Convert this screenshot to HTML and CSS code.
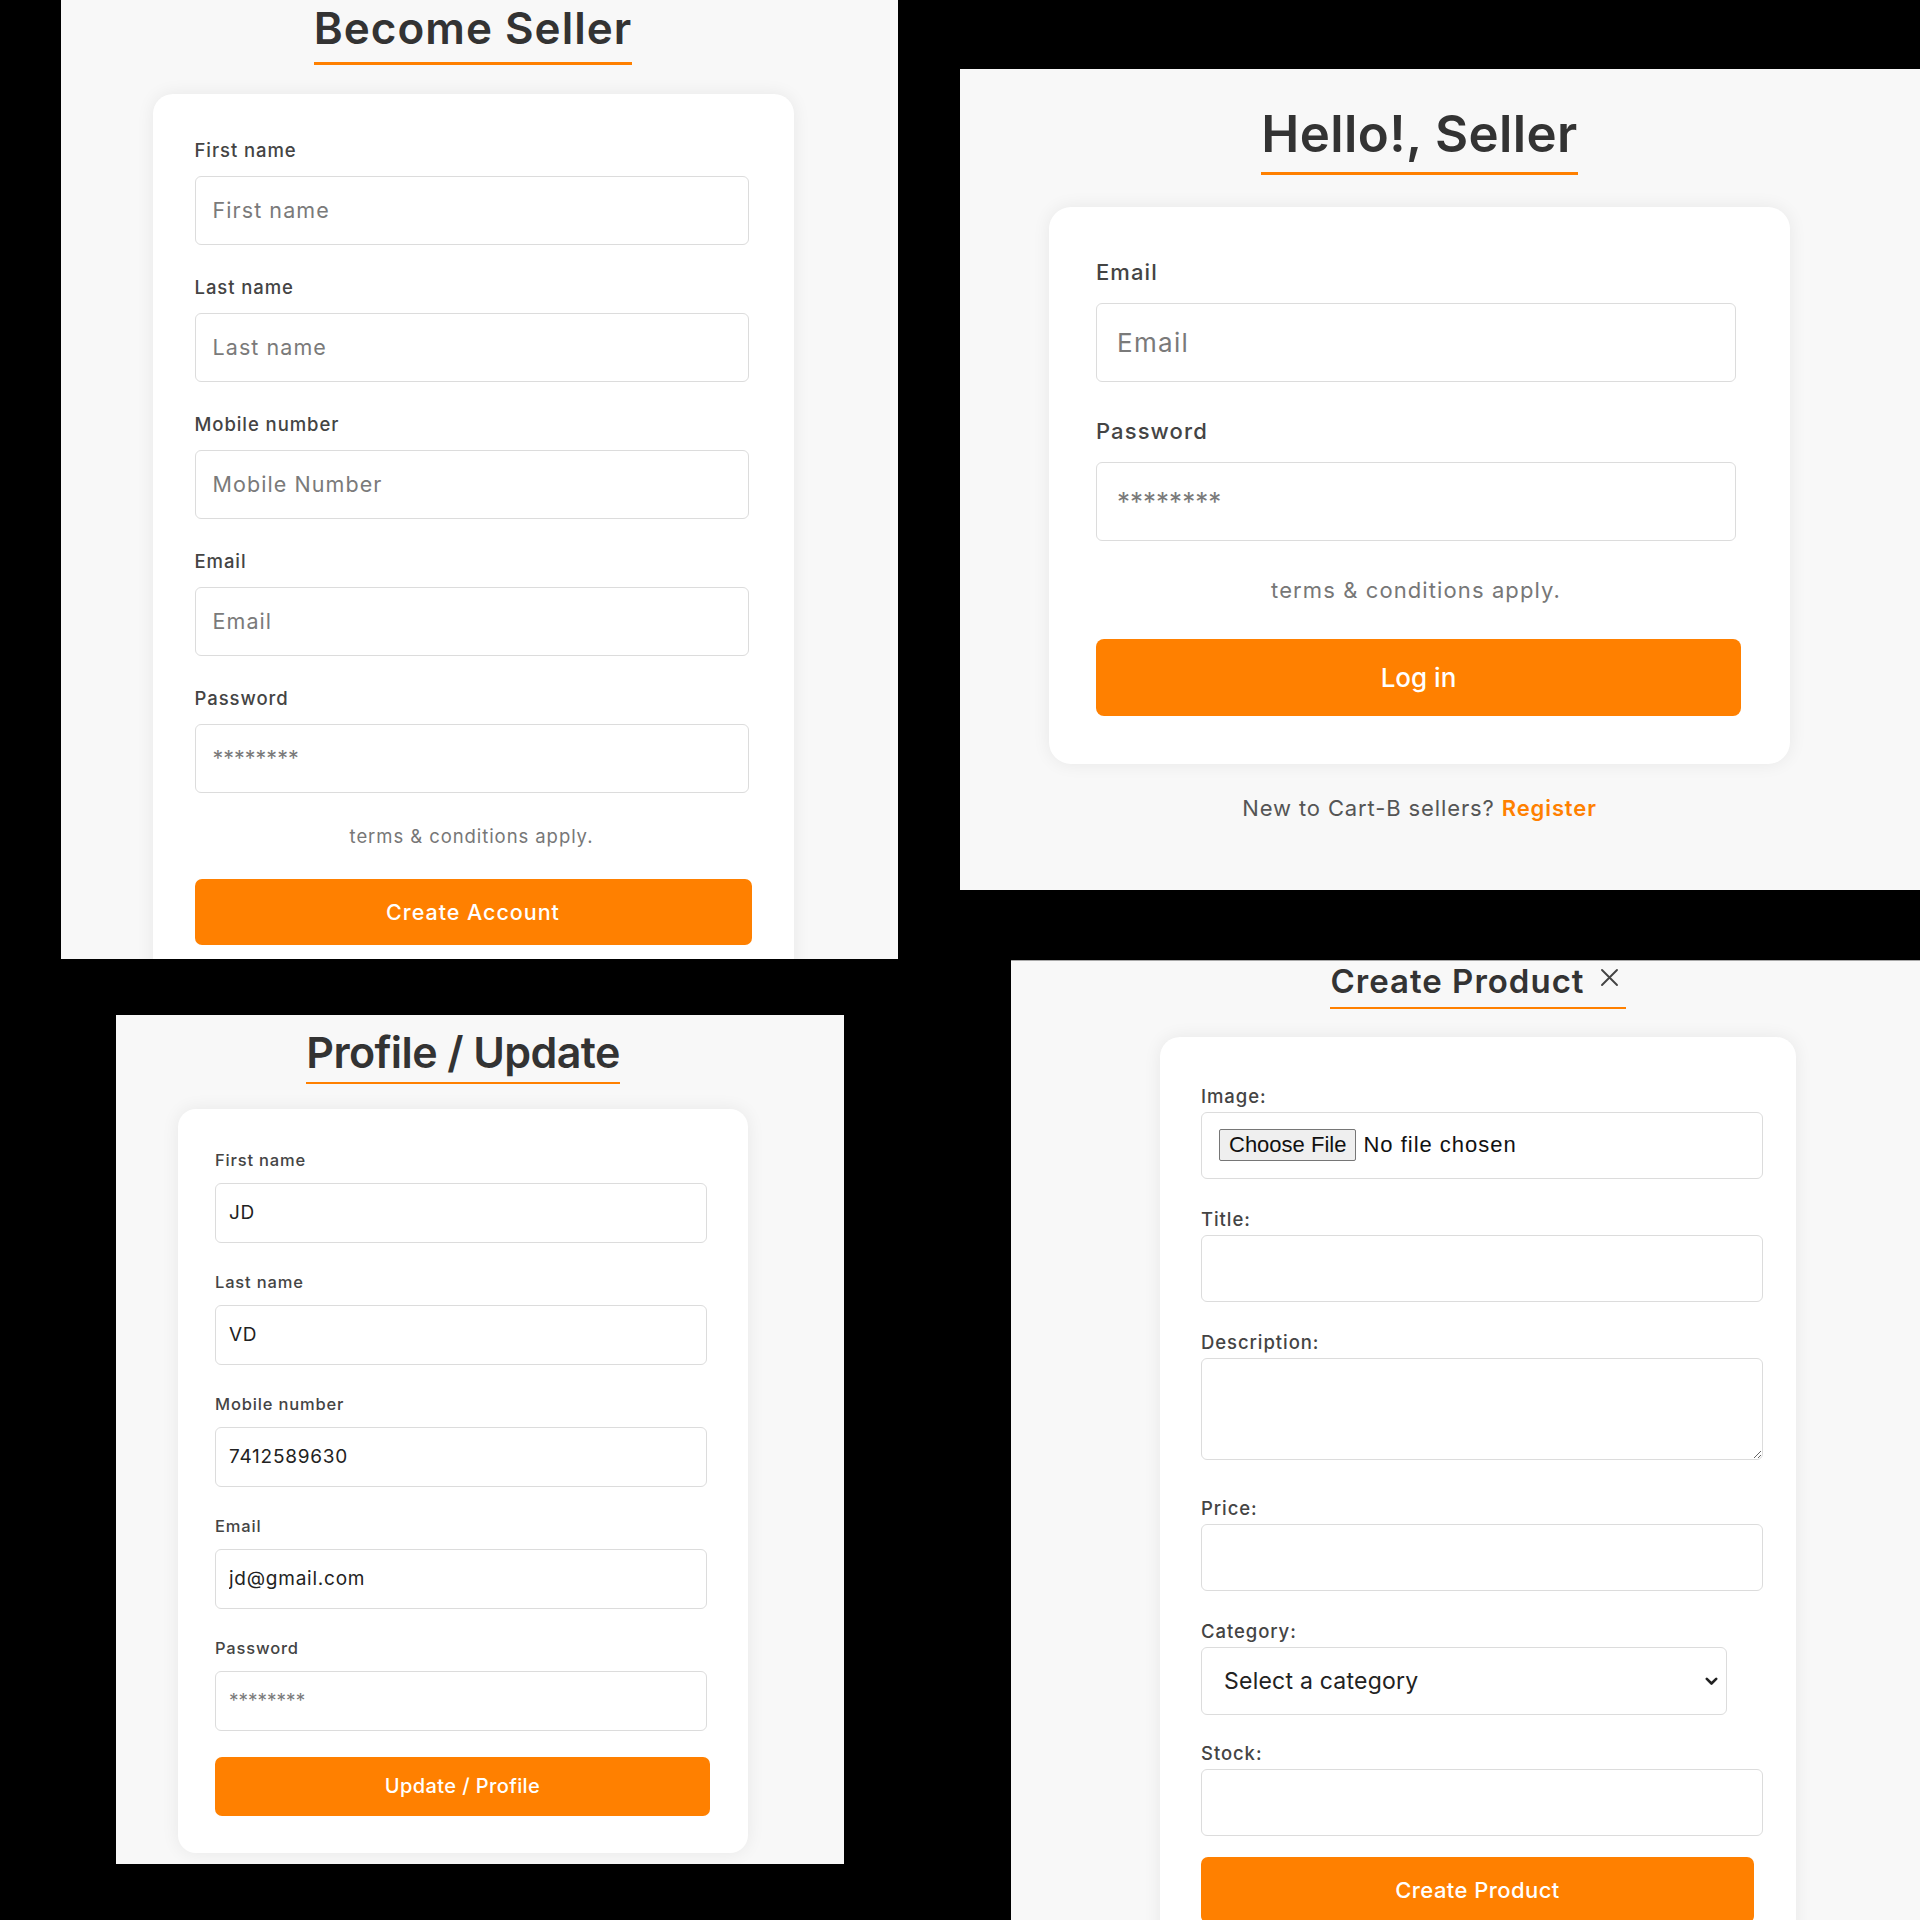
FILE: index.html
```html
<!DOCTYPE html>
<html lang="en">
<head>
<meta charset="utf-8">
<title>Seller screens</title>
<link rel="stylesheet" href="styles.css">
</head>
<body>
<div class="collage">
  <section class="cell">
    <div class="panel p1">
      <h1 class="heading">Become Seller</h1>
      <form class="card">
        <label class="lbl">First name</label>
        <input class="field" type="text" placeholder="First name">
        <label class="lbl">Last name</label>
        <input class="field" type="text" placeholder="Last name">
        <label class="lbl">Mobile number</label>
        <input class="field" type="text" placeholder="Mobile Number">
        <label class="lbl">Email</label>
        <input class="field" type="text" placeholder="Email">
        <label class="lbl">Password</label>
        <input class="field last" type="password" placeholder="********">
        <p class="terms">terms &amp; conditions apply.</p>
        <button class="btn" type="button">Create Account</button>
      </form>
    </div>
  </section>

  <section class="cell">
    <div class="panel p2">
      <h1 class="heading">Hello!, Seller</h1>
      <form class="card">
        <label class="lbl">Email</label>
        <input class="field" type="text" placeholder="Email">
        <label class="lbl">Password</label>
        <input class="field last" type="password" placeholder="********">
        <p class="terms">terms &amp; conditions apply.</p>
        <button class="btn" type="button">Log in</button>
      </form>
      <p class="footer">New to Cart-B sellers? <a class="reg" href="#">Register</a></p>
    </div>
  </section>

  <section class="cell">
    <div class="panel p3">
      <h1 class="heading">Profile / Update</h1>
      <form class="card">
        <label class="lbl">First name</label>
        <input class="field" type="text" value="JD">
        <label class="lbl">Last name</label>
        <input class="field" type="text" value="VD">
        <label class="lbl">Mobile number</label>
        <input class="field" type="text" value="7412589630">
        <label class="lbl">Email</label>
        <input class="field" type="text" value="jd@gmail.com">
        <label class="lbl">Password</label>
        <input class="field last" type="password" placeholder="********">
        <button class="btn" type="button">Update / Profile</button>
      </form>
    </div>
  </section>

  <section class="cell">
    <div class="panel p4">
      <h1 class="heading">Create Product<svg class="close" width="19" height="19" viewBox="0 0 19 19"><path d="M2 2 L17 17 M17 2 L2 17" stroke="#444" stroke-width="1.9" stroke-linecap="round" fill="none"/></svg></h1>
      <form class="card">
        <label class="lbl">Image:</label>
        <div class="field filebox">
          <span class="filebtn">Choose File</span><span class="filetxt">No file chosen</span>
        </div>
        <label class="lbl">Title:</label>
        <input class="field" type="text">
        <label class="lbl">Description:</label>
        <textarea class="field area"></textarea>
        <label class="lbl">Price:</label>
        <input class="field" type="text">
        <label class="lbl">Category:</label>
        <div class="selwrap">
          <select class="field sel"><option>Select a category</option></select>
          <svg class="chev" width="13" height="9" viewBox="0 0 13 9"><path d="M1.8 1.8 L6.5 6.5 L11.2 1.8" stroke="#222" stroke-width="2.6" fill="none" stroke-linecap="round" stroke-linejoin="round"/></svg>
        </div>
        <label class="lbl">Stock:</label>
        <input class="field last" type="text">
        <button class="btn" type="button">Create Product</button>
      </form>
    </div>
  </section>
</div>
</body>
</html>
```

FILE: styles.css
```css
* { box-sizing: border-box; }
html, body { margin: 0; padding: 0; background: #000; }
body { font-family: "Inter", "Open Sans", sans-serif; color: #333; }

.collage {
  display: grid;
  grid-template-columns: 960px 960px;
  grid-template-rows: 960px 960px;
  width: 1920px;
  height: 1920px;
  background: #000;
}
.cell { overflow: hidden; }

.panel {
  background: #f8f8f8;
  display: flex;
  flex-direction: column;
  align-items: center;
  overflow: hidden;
}

.heading {
  display: inline-flex;
  align-items: flex-start;
  margin: 0;
  font-weight: 600;
  color: #333;
  line-height: 1.2;
  border-bottom: 3px solid #ff8000;
  white-space: nowrap;
}

.card {
  background: #fff;
  display: flex;
  flex-direction: column;
  align-items: stretch;
  box-shadow: 0 0 18px rgba(0, 0, 0, 0.07);
  flex-shrink: 0;
}

.lbl { display: block; font-weight: 500; color: #444; letter-spacing: 0.05em; }
.field {
  display: block;
  width: 100%;
  border: 1px solid #dcdcdc;
  border-radius: 6px;
  background: #fff;
  font-family: inherit;
  color: #222;
  outline: none;
  letter-spacing: 0.05em;
}
.field[type="password"] { letter-spacing: 0 !important; }
.field::placeholder { color: #7a7a7a; }
.field.last { margin-bottom: 0 !important; }
.terms { margin: 0; text-align: center; color: #777; letter-spacing: 0.05em; }
.btn {
  display: block;
  border: none;
  background: #ff8000;
  color: #fff;
  font-family: inherit;
  font-weight: 500;
  border-radius: 7px;
  letter-spacing: 0.05em;
}

/* Panel 1 : Become Seller */
.p1 { margin-left: 61px; width: 837px; height: 959px; padding-right: 13px; }
.p1 .heading { font-size: 44px; margin-top: 2px; padding-bottom: 7px; letter-spacing: 1px; }
.p1 .card { width: 641px; margin-top: 29px; padding: 44px 45px 60px 42px; border-radius: 20px; }
.p1 .lbl { font-size: 18.5px; line-height: 24px; margin-bottom: 14px; }
.p1 .field { height: 69px; margin-bottom: 30px; padding: 0 17px; font-size: 21.5px; }
.p1 .terms { font-size: 18.5px; line-height: 24px; margin-top: 31px; }
.p1 .btn { width: 557px; height: 66px; margin-top: 31px; font-size: 21.5px; letter-spacing: 0.045em; }

/* Panel 2 : Hello Seller */
.p2 { margin-top: 69px; width: 960px; height: 821px; padding-right: 41px; }
.p2 .heading { font-size: 51px; margin-top: 34px; padding-bottom: 8px; letter-spacing: 0.4px; }
.p2 .card { width: 741px; margin-top: 32px; padding: 52px 54px 48px 47px; border-radius: 22px; }
.p2 .lbl { font-size: 22px; line-height: 26px; margin-bottom: 18px; }
.p2 .field { height: 79px; margin-bottom: 36px; padding: 0 20px; font-size: 26px; }
.p2 .terms { font-size: 22px; line-height: 26px; margin-top: 36px; }
.p2 .btn { width: 645px; height: 77px; margin-top: 36px; font-size: 26px; border-radius: 8px; letter-spacing: 0; }
.p2 .footer { margin: 29px 0 0; font-size: 22px; line-height: 30px; color: #555; letter-spacing: 0.04em; }
.p2 .reg { color: #ff8000; font-weight: 600; text-decoration: none; }

/* Panel 3 : Profile / Update */
.p3 { margin-left: 116px; margin-top: 55px; width: 728px; height: 849px; padding-right: 34px; }
.p3 .heading { font-size: 43px; margin-top: 12px; padding-bottom: 3px; border-bottom-width: 2px; letter-spacing: -0.6px; }
.p3 .card { width: 570px; margin-top: 25px; padding: 41px 41px 37px 37px; border-radius: 18px; }
.p3 .lbl { font-size: 16.5px; line-height: 20px; margin-bottom: 13px; }
.p3 .field { height: 60px; margin-bottom: 29px; padding: 0 13px; font-size: 19px; letter-spacing: 0.04em; }
.p3 .btn { width: 495px; height: 59px; margin-top: 26px; font-size: 20px; letter-spacing: 0.02em; }

/* Panel 4 : Create Product */
.p4 { margin-left: 51px; width: 909px; height: 960px; padding-left: 25px; border-top: 1px solid #a8a8a8; }
.p4 .heading { font-size: 33px; margin-top: 1px; padding-bottom: 5px; border-bottom-width: 2.5px; letter-spacing: 1px; }
.p4 .close { margin: 6px 7px 0 15px; flex-shrink: 0; }
.p4 .card { width: 636px; margin-top: 28px; padding: 48px 33px 40px 41px; border-radius: 20px; }
.p4 .lbl { font-size: 18.5px; line-height: 22px; margin-bottom: 5px; }
.p4 .field { height: 67px; margin-bottom: 29px; padding: 0 16px; font-size: 20px; }
.p4 .area { height: 102px; resize: vertical; margin-bottom: 37px; }
.p4 .filebox { display: flex; align-items: center; padding-left: 17px; letter-spacing: 0; }
.p4 .filebtn {
  font-family: "Liberation Sans", Arial, sans-serif;
  font-size: 22px;
  color: #111;
  background: #efefef;
  border: 1px solid #767676;
  border-radius: 2px;
  padding: 2px 9px;
  line-height: 26px;
  margin-right: 7px;
}
.p4 .filetxt { font-family: "Liberation Sans", Arial, sans-serif; font-size: 22px; color: #111; letter-spacing: 1px; }
.p4 .selwrap { position: relative; width: 526px; margin-bottom: 27px; }
.p4 .sel {
  appearance: none;
  -webkit-appearance: none;
  margin-bottom: 0;
  height: 68px;
  padding: 0 22px;
  font-size: 23px;
  color: #222;
  letter-spacing: 0.01em;
}
.p4 .chev { position: absolute; right: 9px; top: 30px; pointer-events: none; }
.p4 .btn { width: 553px; height: 66px; margin-top: 21px; font-size: 22px; letter-spacing: 0.02em; flex-shrink: 0; }
```
